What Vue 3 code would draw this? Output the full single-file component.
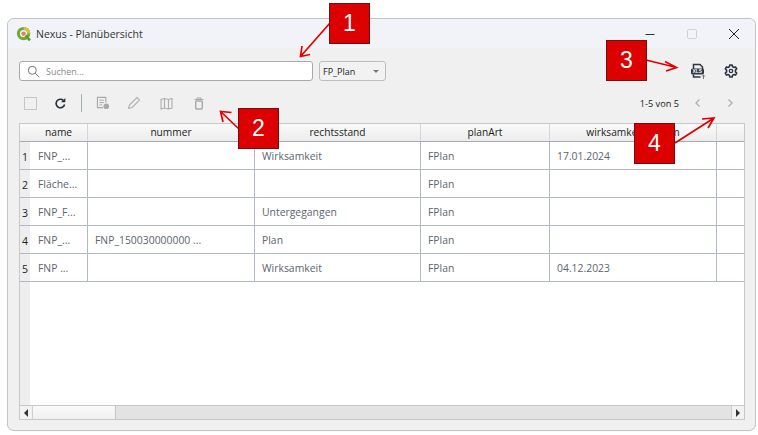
<script setup>
const columns = ['name', 'nummer', 'rechtsstand', 'planArt', 'wirksamkeitsdatum', '']
const rows = [
  ['FNP_...', '', 'Wirksamkeit', 'FPlan', '17.01.2024', ''],
  ['Fläche...', '', '', 'FPlan', '', ''],
  ['FNP_F...', '', 'Untergegangen', 'FPlan', '', ''],
  ['FNP_...', 'FNP_150030000000 ...', 'Plan', 'FPlan', '', ''],
  ['FNP ...', '', 'Wirksamkeit', 'FPlan', '04.12.2023', ''],
]
const callouts = [
  { n: 1, x: 329, y: 3 },
  { n: 2, x: 238, y: 108 },
  { n: 3, x: 606, y: 40 },
  { n: 4, x: 634, y: 123 },
]
</script>

<template>
  <div class="page">
    <div class="window">
      <div class="titlebar">
        <svg class="logo" width="16" height="16" viewBox="0 0 16 16">
          <circle cx="7.6" cy="7.6" r="5.2" fill="none" stroke="#6fa83a" stroke-width="3" />
          <path d="M7.6 2.4a5.2 5.2 0 0 1 5.2 5.2" fill="none" stroke="#d9c04a" stroke-width="3" />
          <circle cx="7.6" cy="7.6" r="2.2" fill="#e8824a" />
          <path d="M9.5 9.5l4.500 4.800" stroke="#5f9a32" stroke-width="2.600" />
        </svg>
        <span class="title">Nexus - Planübersicht</span>
        <div class="winctl">
          <svg width="12" height="12" viewBox="0 0 12 12"><path d="M1.500 6.500h9" stroke="#333" stroke-width="1" /></svg>
          <svg width="12" height="12" viewBox="0 0 12 12"><rect x="1.500" y="1.500" width="9" height="9" rx="1.200" fill="none" stroke="#cfcfd4" /></svg>
          <svg width="12" height="12" viewBox="0 0 12 12"><path d="M1 1l10 10M11 1L1 11" stroke="#222" stroke-width="1" /></svg>
        </div>
      </div>

      <div class="content">
        <div class="searchrow">
          <div class="search">
            <svg width="13" height="13" viewBox="0 0 13 13">
              <circle cx="5.300" cy="5.300" r="4" fill="none" stroke="#777" />
              <path d="M8.300 8.300l4 4" stroke="#777" />
            </svg>
            <span>Suchen...</span>
          </div>
          <div class="select">
            <span>FP_Plan</span>
            <i class="caret"></i>
          </div>
          <div class="spacer"></div>
          <svg class="ic xls" width="16" height="16" viewBox="0 0 16 16">
            <path d="M3.500 6V1.500h6.500l2.500 2.500v2" fill="none" stroke="#2d3743" stroke-width="1.500" />
            <rect x="1" y="5.500" width="13" height="6" rx="1.500" fill="#2d3743" />
            <text x="2.500" y="10.200" class="xlstext">XLS</text>
            <path d="M3.500 11.500v2.500h7" fill="none" stroke="#2d3743" stroke-width="1.500" />
            <path d="M13.500 16v-4M12 13.500l1.500-1.500 1.500 1.500" fill="none" stroke="#6b7580" />
          </svg>
          <svg class="ic gear" width="14" height="14" viewBox="0 0 14 14">
            <path d="M5.800 1h2.400l.4 1.700 1.200.7 1.700-.5 1.200 2.100-1.300 1.200v1.600l1.300 1.200-1.200 2.100-1.700-.5-1.200.7-.4 1.700H5.800l-.4-1.700-1.200-.7-1.700.5-1.200-2.100 1.300-1.200V6.200L1.300 5l1.200-2.100 1.700.5 1.200-.7z" fill="none" stroke="#2d3743" stroke-width="1.600" stroke-linejoin="round" />
            <circle cx="7" cy="7" r="1.700" fill="none" stroke="#2d3743" stroke-width="1.300" />
          </svg>
        </div>

        <div class="toolrow">
          <div class="check"></div>
          <svg class="refresh" width="13" height="13" viewBox="0 0 13 13">
            <path d="M10.600 7.500A4.300 4.300 0 1 1 9.300 3.300" fill="none" stroke="#27313b" stroke-width="1.600" />
            <path d="M11.300 1v4.300H7z" fill="#27313b" />
          </svg>
          <div class="sep"></div>
          <svg class="dis first" width="14" height="14" viewBox="0 0 15 15">
            <path d="M10.500 7V1.500h-9v11h6" fill="none" stroke="#a9a9a9" stroke-width="1.200" />
            <path d="M3.500 4.500h5M3.500 7h5M3.500 9.500h3" stroke="#a9a9a9" />
            <circle cx="11" cy="11" r="3" fill="#a9a9a9" />
          </svg>
          <svg class="dis second" width="14" height="14" viewBox="0 0 14 14">
            <path d="M1.500 12.500l1-3.500 7.500-7.500 2.500 2.500L5 11.500z" fill="none" stroke="#b5b5b5" stroke-width="1.200" stroke-linejoin="round" />
          </svg>
          <svg class="dis third" width="13" height="13" viewBox="0 0 13 13">
            <path d="M1 2.500l3.500-1 4 1 3.500-1v9.500l-3.500 1-4-1-3.500 1zM4.500 1.500v9.500M8.500 2.500v9.500" fill="none" stroke="#adadad" stroke-width="1.100" />
          </svg>
          <svg class="dis fourth" width="12" height="13" viewBox="0 0 12 13">
            <path d="M1.500 2.500h9M4 2.500v-1.500h4v1.500" fill="none" stroke="#a9a9a9" />
            <rect x="2.700" y="4" width="6.600" height="8" rx="1" fill="none" stroke="#a9a9a9" stroke-width="1.400" />
          </svg>
          <div class="spacer"></div>
          <span class="count">1-5 von 5</span>
          <svg class="chev" width="8" height="10" viewBox="0 0 8 10"><path d="M5.500 1.500L2 5l3.500 3.500" fill="none" stroke="#aeaeae" stroke-width="1.300" /></svg>
          <svg class="chev right" width="8" height="10" viewBox="0 0 8 10"><path d="M2.500 1.500L6 5 2.500 8.500" fill="none" stroke="#aeaeae" stroke-width="1.300" /></svg>
        </div>

        <div class="table">
          <div class="grid head">
            <div class="rowhead"></div>
            <div v-for="(c, i) in columns" :key="i" class="hcell">{{ c }}</div>
          </div>
          <div v-for="(r, ri) in rows" :key="ri" class="grid row">
            <div class="rowhead num">{{ ri + 1 }}</div>
            <div v-for="(v, ci) in r" :key="ci" class="cell">{{ v }}</div>
          </div>
          <div class="tablefill">
            <div class="fillhead"></div>
          </div>
          <div class="scrollbar">
            <div class="sbtn"><i class="tri left"></i></div>
            <div class="thumb"></div>
            <div class="track"></div>
            <div class="sbtn end"><i class="tri rightt"></i></div>
          </div>
        </div>
      </div>
    </div>

    <svg class="arrows" width="758" height="435" viewBox="0 0 758 435">
      <g fill="none" stroke="#e00000" stroke-width="1.700">
        <path d="M330 23L300.500 56.500M302 46L300.500 56.500L310 54.500" />
        <path d="M239 129L220.500 111.500M223 122L220.500 111.500L231.500 112.500" />
        <path d="M646 60L676.500 67.500M665 61.500L676.500 67.500L666 71" />
        <path d="M675 143L714 118M702 119L714 118L708 128" />
      </g>
    </svg>
    <div
      v-for="c in callouts"
      :key="c.n"
      class="callout"
      :style="{ left: c.x + 'px', top: c.y + 'px' }"
    >{{ c.n }}</div>
  </div>
</template>

<style>
html, body { margin: 0; background: #fff; }
</style>

<style scoped>
.page {
  position: relative;
  width: 758px;
  height: 435px;
  overflow: hidden;
  background: #fff;
  font-family: "Open Sans", "Noto Sans", sans-serif;
  font-size: 10.300px;
  color: #222;
}
.window {
  box-sizing: border-box;
  margin-left: 7px;
  position: relative;
  top: 18px;
  width: 749px;
  height: 413px;
  background: #f0f0f0;
  border: 1px solid #c4c4c4;
  border-radius: 7px;
  box-shadow: 0 0 1px #ddd;
  overflow: hidden;
  display: flex;
  flex-direction: column;
}
.titlebar {
  height: 29px;
  flex: none;
  background: #f1f3f8;
  display: flex;
  align-items: center;
  padding: 0 0 0 8px;
}
.logo { margin-right: 4px; }
.title { font-size: 10.500px; color: #333; }
.winctl {
  margin-left: auto;
  display: flex;
  gap: 30px;
  padding-right: 15px;
}
.content {
  flex: 1;
  padding: 13px 10px 10px 11px;
  display: flex;
  flex-direction: column;
  min-height: 0;
}
.searchrow {
  display: flex;
  align-items: center;
  height: 20px;
}
.search {
  box-sizing: border-box;
  width: 294px;
  height: 20px;
  background: #fff;
  border: 1px solid #a9a9a9;
  border-radius: 3px;
  display: flex;
  align-items: center;
  gap: 6px;
  padding-left: 7px;
  color: #8a8a8a;
  font-size: 9px;
}
.select {
  box-sizing: border-box;
  margin-left: 6px;
  width: 67px;
  height: 20px;
  border: 1px solid #bdbdbd;
  border-radius: 3px;
  background: #f2f2f2;
  display: flex;
  align-items: center;
  justify-content: space-between;
  padding: 0 6px 0 3px;
  font-size: 9px;
  color: #222;
}
.caret {
  width: 0;
  height: 0;
  border-left: 3.500px solid transparent;
  border-right: 3.500px solid transparent;
  border-top: 3.500px solid #777;
}
.spacer { flex: 1; }
.ic.xls { margin-right: 18px; }
.ic.gear { margin-right: 7px; }
.xlstext {
  font-size: 4.800px;
  font-weight: 700;
  fill: #fff;
  font-family: "Liberation Sans", sans-serif;
}
.toolrow {
  display: flex;
  align-items: center;
  height: 26px;
  margin-top: 9px;
  padding-left: 5px;
}
.check {
  box-sizing: border-box;
  width: 13px;
  height: 13px;
  background: #f0f0f0;
  border: 1px solid #c6c6c6;
}
.refresh { margin-left: 17px; }
.sep {
  width: 1px;
  height: 18px;
  background: #a5adb5;
  margin: 0 14px;
}
.dis.first { margin-right: 17px; }
.dis.second { margin-right: 19px; }
.dis.third { margin-right: 20px; }
.count { font-size: 9.200px; color: #222; margin-right: 15px; }
.chev { margin-right: 24px; }
.chev.right { margin-right: 11px; }
.table {
  box-sizing: border-box;
  flex: 1;
  margin-top: 7px;
  background: #fff;
  border: 1px solid #c8c8c8;
  display: flex;
  flex-direction: column;
  min-height: 0;
}
.grid {
  display: grid;
  grid-template-columns: 10px 58px 167px 166px 129px 167px 1fr;
}
.head {
  height: 18px;
  background: linear-gradient(#fafafa, #ececec);
  border-bottom: 1px solid #a9a9b4;
  box-sizing: border-box;
  text-align: center;
}
.head .rowhead { background: transparent; border-right: none; }
.hcell {
  border-right: 1px solid #d6d6d6;
  line-height: 17px;
  color: #222;
  font-size: 10.200px;
}
.hcell:last-child { border-right: none; }
.row {
  height: 28px;
  grid-template-rows: 27px;
  box-sizing: border-box;
  border-bottom: 1px solid #b3b8c8;
}
.rowhead { background: #eeeeee; }
.num {
  font-size: 10.500px;
  line-height: 30px;
  padding-left: 2px;
  color: #222;
}
.cell {
  box-sizing: border-box;
  border-right: 1px solid #b3b8c8;
  padding-left: 7px;
  line-height: 28px;
  color: #5d646c;
  font-size: 10.400px;
  white-space: nowrap;
  overflow: hidden;
}
.num + .cell { padding-left: 8px; }
.cell:last-child { border-right: none; }
.tablefill { flex: 1; min-height: 0; position: relative; }
.fillhead { width: 10px; height: 100%; background: #eeeeee; }
.scrollbar {
  flex: none;
  height: 14px;
  box-sizing: border-box;
  border-top: 1px solid #c8c8c8;
  display: flex;
  background: #e3e3e3;
}
.sbtn {
  box-sizing: border-box;
  width: 13px;
  background: #f2f2f2;
  border-right: 1px solid #cfcfcf;
  display: flex;
  align-items: center;
  justify-content: center;
}
.sbtn.end { border-right: none; border-left: 1px solid #cfcfcf; }
.thumb {
  width: 82px;
  background: linear-gradient(#fafafa, #f0f0f0);
  border-right: 1px solid #c4c4c4;
}
.track { flex: 1; }
.tri { width: 0; height: 0; border-top: 4px solid transparent; border-bottom: 4px solid transparent; }
.tri.left { border-right: 4px solid #333; }
.tri.rightt { border-left: 4px solid #333; }
.arrows { position: absolute; left: 0; top: 0; pointer-events: none; }
.callout {
  position: absolute;
  box-sizing: border-box;
  width: 41px;
  height: 41px;
  background: #dd0000;
  border: 1px solid #6e1010;
  color: #fff;
  font-family: "Liberation Sans", sans-serif;
  font-size: 23px;
  display: flex;
  align-items: center;
  justify-content: center;
}
</style>
